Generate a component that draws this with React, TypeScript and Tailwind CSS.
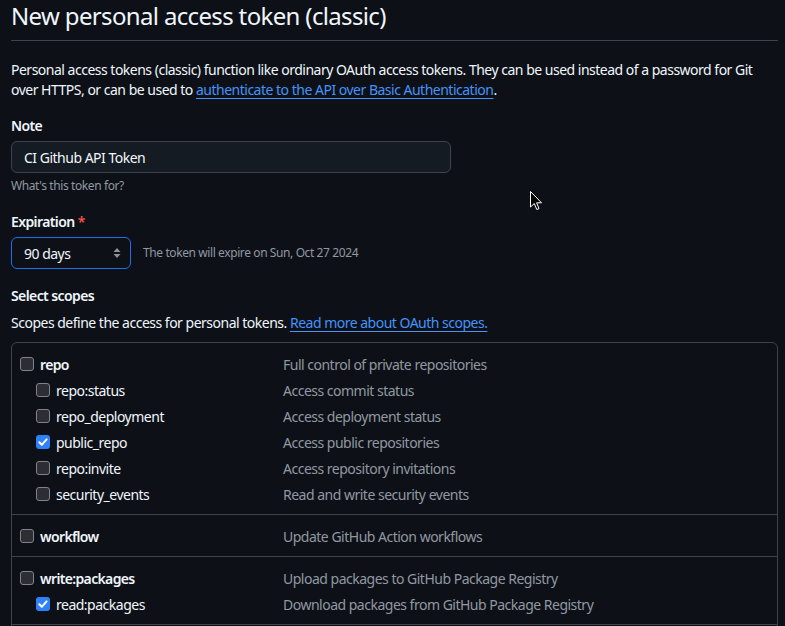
import React from "react";

type Item = { name: string; desc: string; top?: boolean; checked?: boolean };

const groups: Item[][] = [
  [
    { name: "repo", desc: "Full control of private repositories", top: true },
    { name: "repo:status", desc: "Access commit status" },
    { name: "repo_deployment", desc: "Access deployment status" },
    { name: "public_repo", desc: "Access public repositories", checked: true },
    { name: "repo:invite", desc: "Access repository invitations" },
    { name: "security_events", desc: "Read and write security events" },
  ],
  [{ name: "workflow", desc: "Update GitHub Action workflows", top: true }],
  [
    { name: "write:packages", desc: "Upload packages to GitHub Package Registry", top: true },
    { name: "read:packages", desc: "Download packages from GitHub Package Registry", checked: true },
  ],
  [{ name: "delete:packages", desc: "Delete packages from GitHub Package Registry", top: true }],
];

function Checkbox({ checked }: { checked?: boolean }) {
  if (checked) {
    return (
      <span className="flex h-[14px] w-[14px] shrink-0 items-center justify-center rounded-[3px] bg-[#2f81f7]">
        <svg width="12" height="12" viewBox="0 0 12 12">
          <path d="M2.3 6.3 L4.8 8.8 L9.6 3.4" fill="none" stroke="#ffffff" strokeWidth="2" strokeLinecap="round" strokeLinejoin="round" />
        </svg>
      </span>
    );
  }
  return <span className="h-[14px] w-[14px] shrink-0 rounded-[3px] border-[1.5px] border-[#80838c] bg-[#2c2e34]" />;
}

export default function App() {
  return (
    <div className="relative h-[626px] w-[785px] overflow-hidden bg-[#0d1117] font-['Segoe_UI','Noto_Sans',sans-serif] text-[14px] tracking-[-0.5px] text-[#e6edf3]">
      <div className="pl-[11px] pr-[7px]">
        <div className="flex h-[41px] items-start border-b border-[#3d444d]">
          <h1 className="mt-[1px] text-[24px] leading-[30px] font-normal tracking-[-0.65px] text-[#f0f6fc]">New personal access token (classic)</h1>
        </div>

        <p className="mt-[19px] whitespace-nowrap leading-[20px] text-[#f0f6fc]">
          Personal access tokens (classic) function like ordinary OAuth access tokens. They can be used instead of a password for Git
          <br />
          over HTTPS, or can be used to{" "}
          <a className="text-[#4493f8] underline underline-offset-[3px]">authenticate to the API over Basic Authentication</a>.
        </p>

        <div className="mt-[16px] h-[20px] leading-[20px] font-semibold tracking-[-0.6px] text-[#f0f6fc]">Note</div>
        <div className="mt-[5px] flex h-[32px] w-[440px] items-center rounded-[6px] border border-[#3d444d] bg-[#151b23] pl-[12px] text-[#f0f6fc]">
          CI Github API Token
        </div>
        <div className="mt-[4px] h-[18px] text-[12px] leading-[18px] tracking-[-0.4px] text-[#9198a1]">What's this token for?</div>

        <div className="mt-[17px] h-[20px] leading-[20px] font-semibold tracking-[-0.6px] text-[#f0f6fc]">
          Expiration <span className="text-[#f85149]">*</span>
        </div>
        <div className="mt-[5px] flex items-center">
          <div className="flex h-[32px] w-[120px] items-center justify-between rounded-[6px] border border-[#1f6feb] bg-[#0d1117] pl-[12px] pr-[9px] text-[#f0f6fc]">
            <span>90 days</span>
            <svg width="8" height="12" viewBox="0 0 8 12">
              <path d="M4 1 L7.5 5 L0.5 5 Z" fill="#8b929b" />
              <path d="M4 11 L7.5 7 L0.5 7 Z" fill="#8b929b" />
            </svg>
          </div>
          <span className="ml-[12px] text-[12px] tracking-[-0.4px] text-[#9198a1]">The token will expire on Sun, Oct 27 2024</span>
        </div>

        <div className="mt-[17px] h-[20px] leading-[20px] font-semibold tracking-[-0.6px] text-[#f0f6fc]">Select scopes</div>
        <p className="mt-[7px] h-[20px] leading-[20px] text-[#f0f6fc]">
          Scopes define the access for personal tokens.{" "}
          <a className="text-[#4493f8] underline underline-offset-[3px]">Read more about OAuth scopes.</a>
        </p>

        <div className="mt-[9px] rounded-[6px] border border-[#3d444d]">
          {groups.map((g, gi) => (
            <div key={gi} className={`pt-[8px] pb-[7px] ${gi > 0 ? "border-t border-[#3d444d]" : ""}`}>
              {g.map((it) => (
                <div key={it.name} className="flex h-[26px] items-center">
                  <div className={`flex w-[271px] items-center gap-[6px] ${it.top ? "pl-[8px]" : "pl-[24px]"}`}>
                    <Checkbox checked={it.checked} />
                    <span className={it.top ? "font-semibold tracking-[-0.65px] text-[#f0f6fc]" : "text-[#f0f6fc]"}>{it.name}</span>
                  </div>
                  <div className="text-[#9198a1]">{it.desc}</div>
                </div>
              ))}
            </div>
          ))}
        </div>
      </div>

      <svg className="absolute left-[530px] top-[191px]" width="13" height="21" viewBox="0 0 13 21">
        <path d="M0.5 0.5 L0.5 16 L4.3 12.5 L6.8 18.5 L9 17.6 L6.6 11.8 L11.5 11.8 Z" fill="#000000" stroke="#ffffff" strokeWidth="1" strokeLinejoin="round" />
      </svg>
    </div>
  );
}
